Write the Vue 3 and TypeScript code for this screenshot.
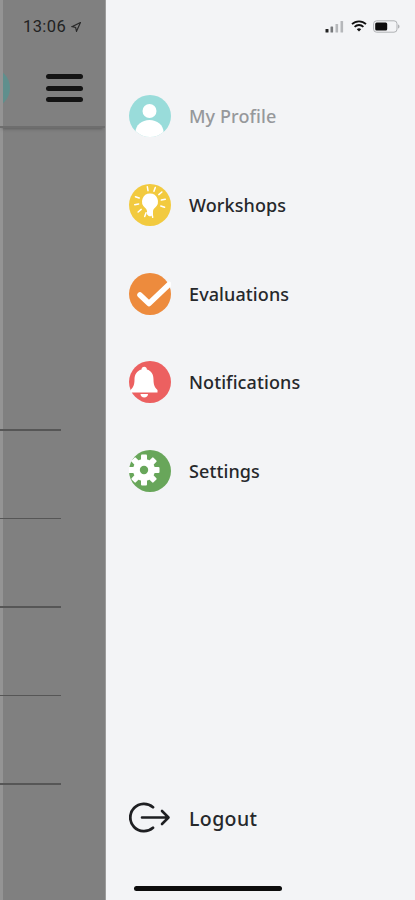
<script setup lang="ts">
type MenuItem = { key: string; label: string; muted?: boolean }

const items: MenuItem[] = [
  { key: 'profile', label: 'My Profile', muted: true },
  { key: 'workshops', label: 'Workshops' },
  { key: 'evaluations', label: 'Evaluations' },
  { key: 'notifications', label: 'Notifications' },
  { key: 'settings', label: 'Settings' }
]

const rows = [1, 2, 3, 4, 5]
const rays = [-100, -70, -40, -10, 20, 200, 170, 140, 110, 80]
const teeth = [0, 45, 90, 135, 180, 225, 270, 315]
</script>

<template>
  <div class="screen">
    <div class="backdrop">
      <div class="time">13:06
        <svg class="arrow" width="10" height="10" viewBox="0 0 10 10"><path d="M9.500.5 1 4.600l3.600.8.9 3.900z" fill="none" stroke="#2a2a2a" stroke-width="1.200" /></svg>
      </div>
      <div class="topbar">
        <span class="avatar"></span>
        <span class="burger"><i></i><i></i><i></i></span>
      </div>
      <div class="lines">
        <div v-for="r in rows" :key="r" class="line"></div>
      </div>
    </div>

    <aside class="drawer">
      <div class="status">
        <svg width="20" height="13" viewBox="0 0 20 13">
          <rect x="0.500" y="9" width="3" height="3.500" rx="0.600" fill="#222" />
          <rect x="5.500" y="6.500" width="2.600" height="6" rx="0.600" fill="#77797c" />
          <rect x="10.500" y="4" width="2.600" height="8.500" rx="0.600" fill="#b5b7ba" />
          <rect x="15.500" y="1" width="2.600" height="11.500" rx="0.600" fill="#b5b7ba" />
        </svg>
        <svg width="16" height="12" viewBox="0 0 16 12">
          <path d="M1 4.200a10 10 0 0 1 14 0" fill="none" stroke="#111" stroke-width="1.800" />
          <path d="M3.600 6.800a6.300 6.300 0 0 1 8.800 0" fill="none" stroke="#111" stroke-width="1.800" />
          <path d="M8 11.600 5.800 9.200a3.200 3.200 0 0 1 4.400 0z" fill="#111" />
        </svg>
        <svg width="27" height="13" viewBox="0 0 27 13">
          <rect x="0.600" y="0.800" width="23.400" height="11.400" rx="3" fill="none" stroke="#b0b2b5" stroke-width="1" />
          <rect x="2.200" y="2.400" width="12" height="8.200" rx="1.500" fill="#0c0c0c" />
          <path d="M25 4.500c1 .3 1.500 1 1.500 2s-.5 1.700-1.500 2z" fill="#b0b2b5" />
        </svg>
      </div>

      <nav class="menu">
        <div v-for="item in items" :key="item.key" class="item" :class="{ muted: item.muted }">
          <svg v-if="item.key === 'profile'" class="icon" viewBox="0 0 42 42">
            <defs><clipPath id="clip-profile"><circle cx="21" cy="21" r="21" /></clipPath></defs>
            <circle cx="21" cy="21" r="21" fill="#99dcda" />
            <g clip-path="url(#clip-profile)" fill="#fff">
              <circle cx="20.500" cy="16" r="7" />
              <ellipse cx="20.500" cy="37" rx="14" ry="12" />
            </g>
          </svg>

          <svg v-else-if="item.key === 'workshops'" class="icon" viewBox="0 0 42 42">
            <circle cx="21" cy="21" r="21" fill="#f2ca3f" />
            <path d="M21 9.500a8 8 0 0 0-5 14.200c1.200 1 1.800 2 2 3.300v3c0 .6.400 1 1 1.200.3.700 1 1.100 2 1.100s1.700-.4 2-1.100c.6-.2 1-.6 1-1.200v-3c.2-1.300.8-2.300 2-3.300A8 8 0 0 0 21 9.500z" fill="#fff" />
            <g stroke="#fff" stroke-width="1.500" stroke-linecap="round">
              <line v-for="a in rays" :key="a" x1="32.500" y1="18" x2="36.500" y2="18" :transform="`rotate(${a} 21 18)`" />
            </g>
          </svg>

          <svg v-else-if="item.key === 'evaluations'" class="icon" viewBox="0 0 42 42">
            <circle cx="21" cy="21" r="21" fill="#ed8b3d" />
            <path d="M11 22 20 30.500 40 11.500" fill="none" stroke="#fff" stroke-width="5.500" stroke-linecap="round" stroke-linejoin="round" />
          </svg>

          <svg v-else-if="item.key === 'notifications'" class="icon" viewBox="0 0 42 42">
            <circle cx="21" cy="21" r="21" fill="#ec6060" />
            <g transform="translate(-5.500 0)" fill="#fff">
              <path d="M18 8.500c0-1.800 1.200-2.800 2.700-2.800s2.700 1 2.700 2.800c4.700 1.300 6.600 5.200 6.600 10 0 5.200 1.200 8 4 10.500v2.500H7v-2.500c2.800-2.500 4-5.300 4-10.500 0-4.800 2.300-8.700 7-10z" />
              <path d="M17 33h7.500c0 2.200-1.600 3.500-3.750 3.500S17 35.200 17 33z" />
            </g>
          </svg>

          <svg v-else-if="item.key === 'settings'" class="icon" viewBox="0 0 42 42">
            <circle cx="21" cy="21" r="21" fill="#68a65a" />
            <g fill="#fff">
              <rect v-for="a in teeth" :key="a" x="12" y="4.500" width="6" height="6" rx="1" :transform="`rotate(${a} 15 20)`" />
              <circle cx="15" cy="20" r="11" />
            </g>
            <circle cx="15" cy="20" r="4.200" fill="#68a65a" />
          </svg>

          <span class="label">{{ item.label }}</span>
        </div>
      </nav>

      <div class="item logout">
        <svg class="icon" viewBox="0 0 42 32">
          <path d="M24 5.200A13.700 13.700 0 1 0 24 25.800" fill="none" stroke="#1e1f22" stroke-width="2.800" stroke-linecap="round" />
          <path d="M13 15.500h26M33 9l6.500 6.500L33 22" fill="none" stroke="#1e1f22" stroke-width="2.600" stroke-linecap="round" stroke-linejoin="round" />
        </svg>
        <span class="label">Logout</span>
      </div>

      <div class="home"></div>
    </aside>
  </div>
</template>

<style scoped>
.screen {
  display: flex;
  width: 415px;
  height: 900px;
  overflow: hidden;
  font-family: "Noto Sans", "Open Sans", sans-serif;
  background: #f3f4f6;
}

.backdrop {
  display: flex;
  flex-direction: column;
  flex: 0 0 106px;
  height: 900px;
  overflow: hidden;
  background: #808080;
  box-shadow: inset 3px 0 0 #949494;
  border-right: 1px solid #9c9c9c;
  box-sizing: border-box;
}

.time {
  display: flex;
  align-items: center;
  gap: 5px;
  height: 26px;
  margin: 13px 0 0 23px;
  font-family: Roboto, "Noto Sans", sans-serif;
  font-size: 16.500px;
  letter-spacing: 0.400px;
  color: #222;
  white-space: nowrap;
}

.arrow {
  margin-top: 1px;
}

.topbar {
  display: flex;
  align-items: center;
  height: 87px;
  border-bottom: 2px solid #6e6e6e;
  box-shadow: 0 3px 3px -2px rgba(60, 60, 60, 0.5);
}

.avatar {
  flex: none;
  width: 40px;
  height: 40px;
  margin: 11px 0 0 -30px;
  border-radius: 50%;
  background: #5f8f8d;
  clip-path: inset(0 0 0 33px);
}

.burger {
  display: flex;
  flex-direction: column;
  gap: 6.500px;
  width: 37px;
  margin: 11px 0 0 36px;
}

.burger i {
  display: block;
  height: 5px;
  border-radius: 3px;
  background: #141414;
}

.lines {
  display: flex;
  flex-direction: column;
  gap: 87px;
  margin-top: 301px;
}

.line {
  width: 61px;
  height: 1.500px;
  background: #565656;
}

.drawer {
  display: flex;
  flex-direction: column;
  flex: 1;
  height: 900px;
}

.status {
  display: flex;
  align-items: center;
  justify-content: flex-end;
  gap: 6px;
  height: 26px;
  margin-top: 13px;
  padding-right: 15px;
}

.menu {
  display: flex;
  flex-direction: column;
  gap: 46.800px;
  margin-top: 56px;
}

.item {
  display: flex;
  align-items: center;
  gap: 18px;
  height: 42px;
  padding-left: 23px;
}

.icon {
  flex: none;
  width: 42px;
  height: 42px;
}

.label {
  font-size: 18px;
  font-weight: 500;
  letter-spacing: 0.100px;
  color: #26282b;
}

.muted .label {
  color: #96989b;
}

.logout {
  margin-top: auto;
}

.logout .icon {
  height: 32px;
}

.logout .label {
  font-size: 19.500px;
  letter-spacing: 0.400px;
}

.home {
  align-self: flex-start;
  width: 148px;
  height: 5px;
  margin: 47px 0 9px 28px;
  border-radius: 3px;
  background: #0c0c0c;
}
</style>
